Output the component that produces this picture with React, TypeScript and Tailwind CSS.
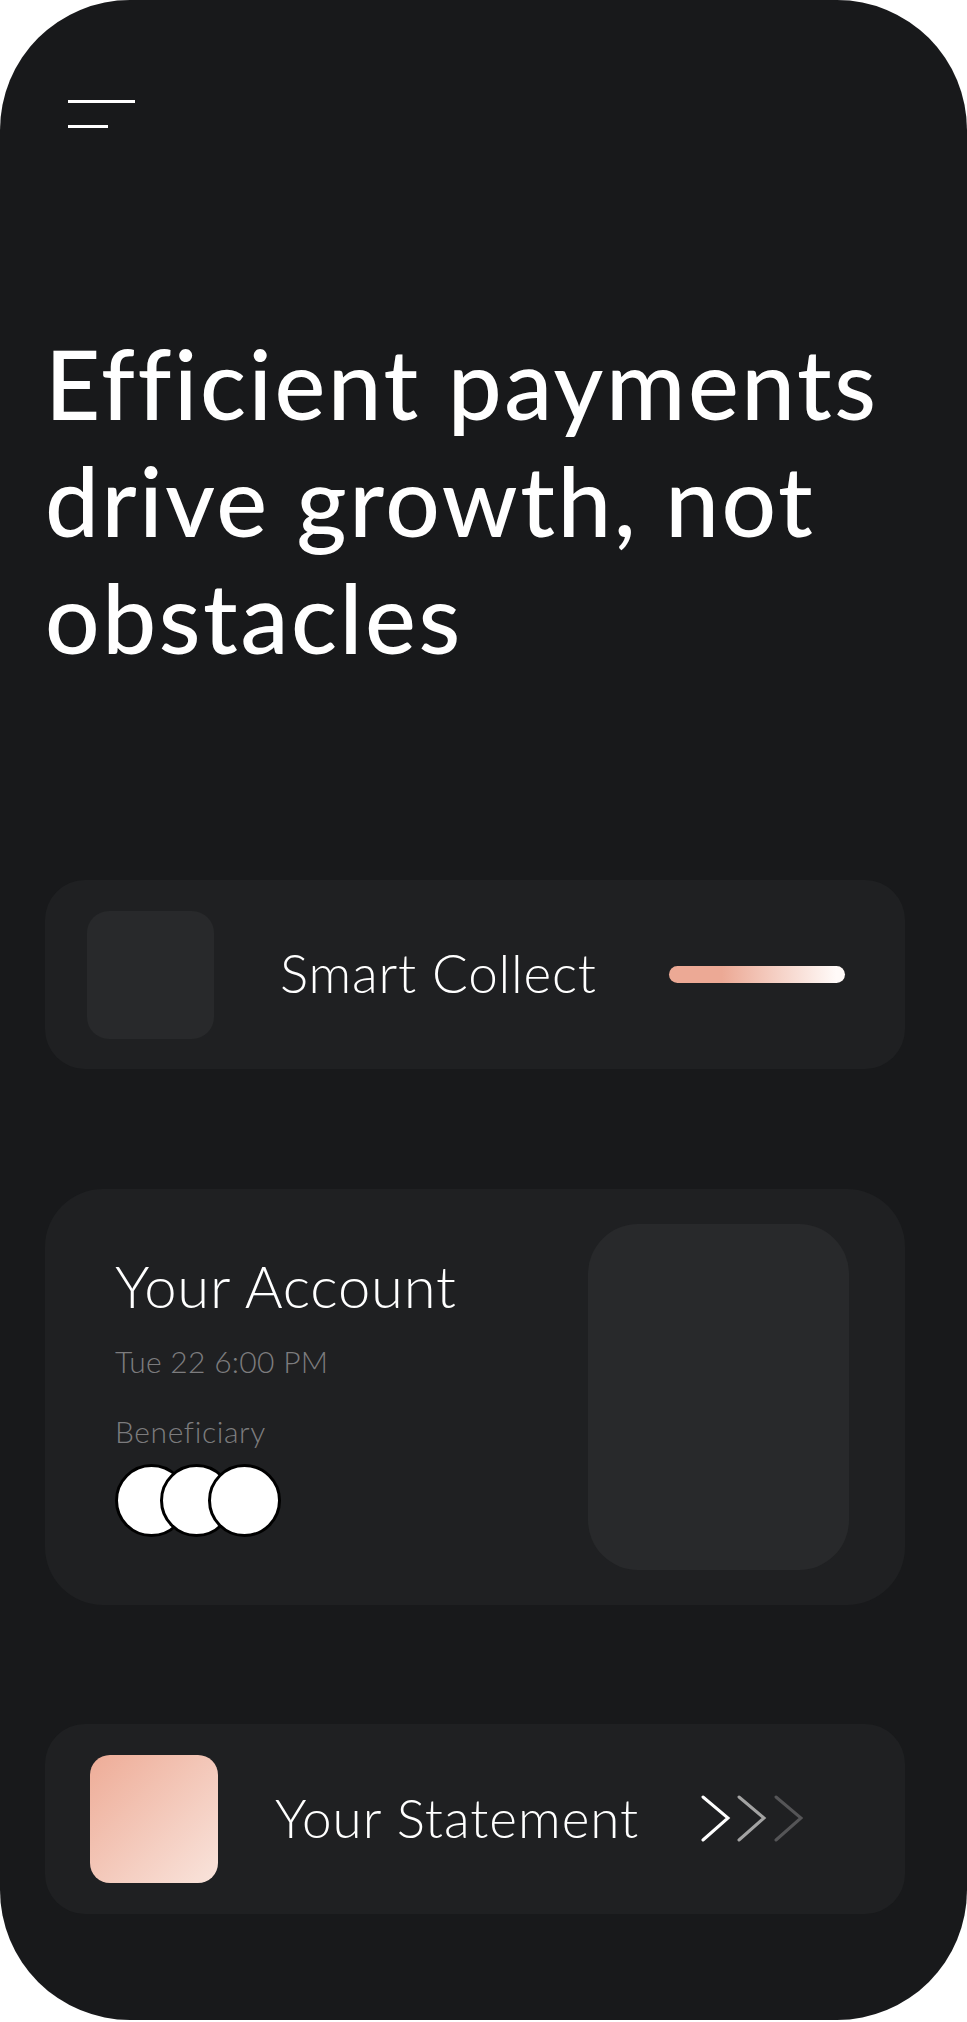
import React from "react";

const font = { fontFamily: "Lato, 'Noto Sans', sans-serif" };

function Chevrons() {
  return (
    <svg width="102" height="48" viewBox="0 0 102 48" fill="none">
      <polyline points="2,2 27,23 2,45" stroke="#ffffff" strokeWidth="3" strokeLinecap="round" strokeLinejoin="miter" />
      <polyline points="38,2 63,23 38,45" stroke="#a3a3a3" strokeWidth="3" strokeLinecap="round" strokeLinejoin="miter" />
      <polyline points="75,2 100,23 75,45" stroke="#555557" strokeWidth="3" strokeLinecap="round" strokeLinejoin="miter" />
    </svg>
  );
}

export default function App() {
  return (
    <div className="bg-white w-[967px] h-[2022px]" style={font}>
      <div className="w-[967px] h-[2020px] rounded-[130px] bg-[#18191b] pl-[45px] pr-[62px] pt-[100px] flex flex-col">
        {/* hamburger */}
        <div className="flex flex-col gap-[22px] pl-[23px]">
          <div className="w-[67px] h-[3px] bg-white" />
          <div className="w-[40px] h-[3px] bg-white" />
        </div>

        {/* heading */}
        <h1 className="mt-[196px] text-white text-[96px] leading-[117px] font-medium tracking-[2.6px] whitespace-nowrap">
          Efficient payments
          <br />
          drive growth, not
          <br />
          obstacles
        </h1>

        {/* Smart Collect */}
        <div className="mt-[205px] h-[189px] rounded-[40px] bg-[#1f2022] flex items-center pl-[42px] pr-[60px]">
          <div className="w-[127px] h-[128px] rounded-[22px] bg-[#28292b]" />
          <div className="ml-[66px] -mt-[4px] text-white text-[53px] font-light leading-none tracking-[0.8px]">Smart Collect</div>
          <div className="ml-auto w-[176px] h-[17px] rounded-full bg-[linear-gradient(90deg,#eca995_30%,#fffaf8_95%)]" />
        </div>

        {/* Your Account */}
        <div className="mt-[120px] h-[416px] rounded-[58px] bg-[#1f2022] flex">
          <div className="flex flex-col pl-[70px] pt-[68px]">
            <div className="text-white text-[58px] font-light leading-[58px] tracking-[0.8px]">Your Account</div>
            <div className="mt-[31px] text-[#7c7c7e] text-[30px] font-light leading-[30px] tracking-[0.3px]">Tue 22 6:00 PM</div>
            <div className="mt-[40px] text-[#7c7c7e] text-[30px] font-light leading-[30px] tracking-[0.6px]">Beneficiary</div>
            <div className="mt-[18px] flex">
              <div className="w-[73px] h-[73px] rounded-full bg-white border-[3.5px] border-black" />
              <div className="-ml-[28px] w-[73px] h-[73px] rounded-full bg-white border-[3.5px] border-black" />
              <div className="-ml-[25px] w-[73px] h-[73px] rounded-full bg-white border-[3.5px] border-black" />
            </div>
          </div>
          <div className="ml-auto my-[35px] mr-[56px] w-[261px] rounded-[50px] bg-[#28292b]" />
        </div>

        {/* Your Statement */}
        <div className="mt-[119px] h-[190px] rounded-[40px] bg-[#1f2022] flex items-center pl-[45px]">
          <div className="w-[128px] h-[128px] rounded-[20px] bg-[linear-gradient(135deg,#eeac97_0%,#f9e4dc_100%)]" />
          <div className="ml-[57px] -mt-[4px] text-white text-[53px] font-light leading-none tracking-[1px]">Your Statement</div>
          <div className="ml-[62px]">
            <Chevrons />
          </div>
        </div>
      </div>
    </div>
  );
}
